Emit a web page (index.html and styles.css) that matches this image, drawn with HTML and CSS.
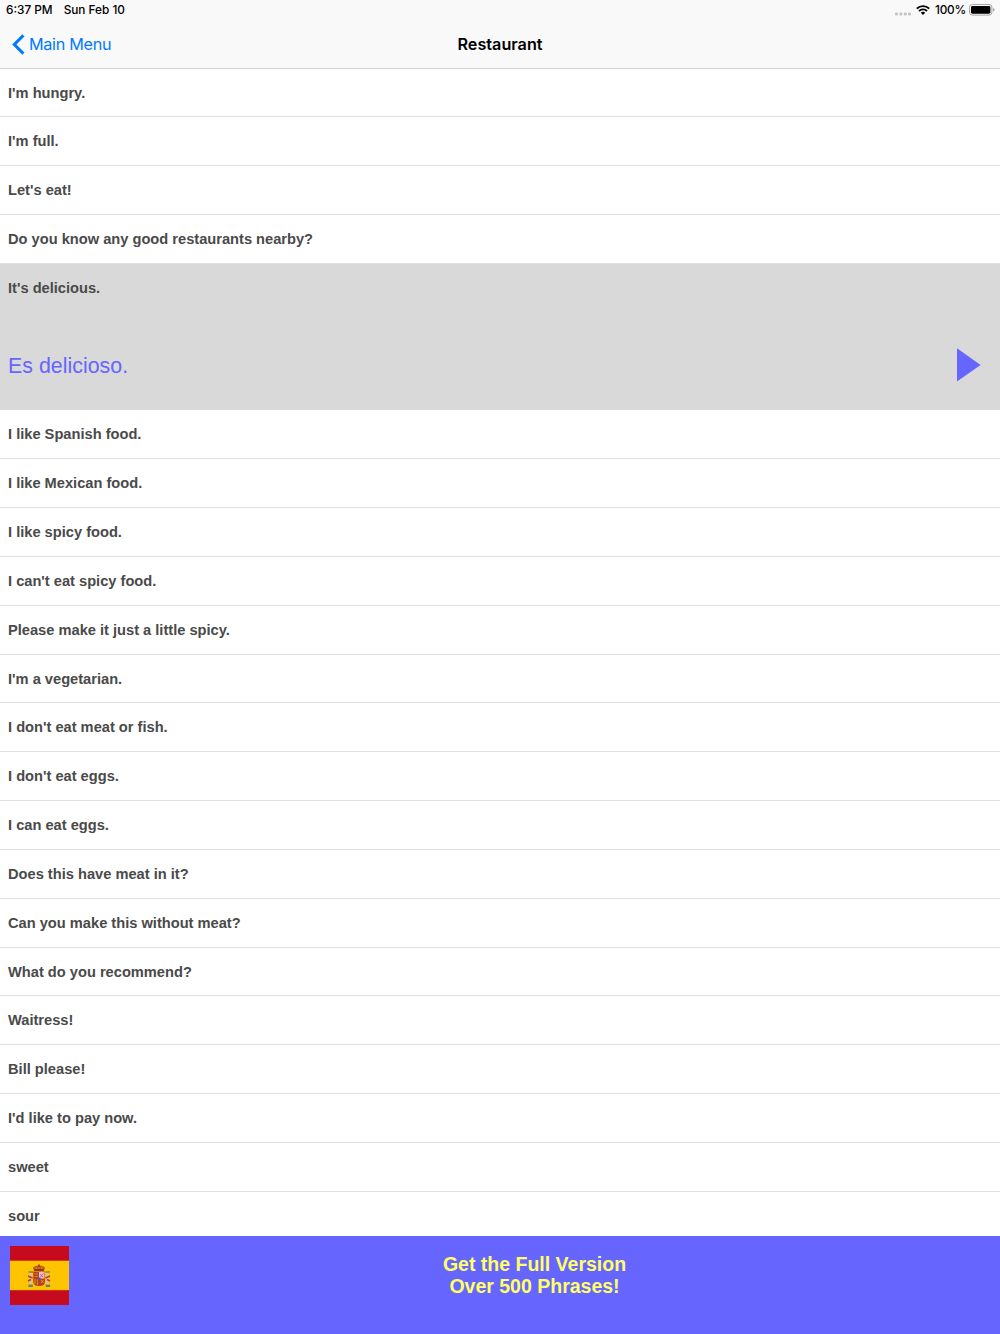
FILE: index.html
```html
<!DOCTYPE html>
<html lang="en">

<head>
  <meta charset="UTF-8">
  <meta name="viewport" content="width=device-width, initial-scale=1.0">
  <link rel="stylesheet" href="styles.css">
  <title>Restaurant</title>
</head>

<body>
  <div class="app">
    <header class="header">
      <!-- Status bar -->
      <div class="status-bar">
        <div class="status-left">
          <span class="time">6:37 PM</span>
          <span class="date">Sun Feb 10</span>
        </div>
        <div class="status-right">
          <svg class="signal" width="16" height="4" viewBox="0 0 16 4" fill="#c4c4c4">
            <rect x="0" y="0.6" width="3" height="2.8" rx="1" />
            <rect x="4.4" y="0.6" width="3" height="2.8" rx="1" />
            <rect x="8.8" y="0.6" width="3" height="2.8" rx="1" />
            <rect x="13" y="0.6" width="3" height="2.8" rx="1" />
          </svg>
          <svg class="wifi" width="14" height="10" viewBox="0 0 14 10" fill="none" stroke="#000" stroke-width="1.9">
            <path d="M0.8 3.7 A8.8 8.8 0 0 1 13.2 3.7" />
            <path d="M3 6 A5.7 5.7 0 0 1 11 6" />
            <path d="M4.8 7.7 A3.2 3.2 0 0 1 9.2 7.7 L7 9.9 Z" fill="#000" stroke="none" />
          </svg>
          <span class="percent">100%</span>
          <svg class="battery" width="26" height="12" viewBox="0 0 26 12">
            <rect x="0.5" y="0.5" width="22.4" height="10.6" rx="2.8" fill="none" stroke="#a6a6a6" />
            <rect x="2" y="2" width="19.4" height="7.7" rx="1.4" fill="#000" />
            <path d="M24 4 Q25.6 4.6 25.6 5.8 Q25.6 7 24 7.7 Z" fill="#a6a6a6" />
          </svg>
        </div>
      </div>

      <!-- Navigation bar -->
      <nav class="nav-bar">
        <a class="back" href="#">
          <svg width="13" height="21" viewBox="0 0 13 21" fill="none" stroke="#007aff" stroke-width="3">
            <path d="M11.4 1.4 L2.3 10.5 L11.4 19.6" />
          </svg>
          <span>Main Menu</span>
        </a>
        <h1>Restaurant</h1>
        <div class="nav-end"></div>
      </nav>
    </header>

    <ul class="phrases">
      <li>I'm hungry.</li>
      <li>I'm full.</li>
      <li>Let's eat!</li>
      <li>Do you know any good restaurants nearby?</li>
      <li class="selected">
        <div class="phrase">It's delicious.</div>
        <div class="answer">
          <span class="translation">Es delicioso.</span>
          <svg class="play" width="24" height="34" viewBox="0 0 24 34">
            <path d="M0 0.3 L23.6 17 L0 33.6 Z" fill="#6666ff" />
          </svg>
        </div>
      </li>
      <li>I like Spanish food.</li>
      <li>I like Mexican food.</li>
      <li>I like spicy food.</li>
      <li>I can't eat spicy food.</li>
      <li>Please make it just a little spicy.</li>
      <li>I'm a vegetarian.</li>
      <li>I don't eat meat or fish.</li>
      <li>I don't eat eggs.</li>
      <li>I can eat eggs.</li>
      <li>Does this have meat in it?</li>
      <li>Can you make this without meat?</li>
      <li>What do you recommend?</li>
      <li>Waitress!</li>
      <li>Bill please!</li>
      <li>I'd like to pay now.</li>
      <li>sweet</li>
      <li>sour</li>
    </ul>

    <!-- Upgrade banner -->
    <footer class="banner">
      <svg class="flag" width="59" height="59" viewBox="0 0 59 59">
        <rect width="59" height="59" fill="#c60b1e" />
        <rect y="14.7" width="59" height="29.5" fill="#ffc400" />
        <!-- pillars -->
        <rect x="19.7" y="25" width="2.2" height="14" fill="#ccc5b5" />
        <rect x="36.5" y="25" width="2.2" height="14" fill="#ccc5b5" />
        <path d="M18.5 26h4.5M35.5 26h4.5M18.5 39.2h4.5M35.5 39.2h4.5" stroke="#a08023" stroke-width="1.5" />
        <path d="M18 30l4.5 2M18 35l3 -1.5M40 30l-4.5 2M40 35l-3 -1.5" stroke="#c43a23" stroke-width="1.6" />
        <path d="M18.3 40.4h4.4M35.8 40.4h4.4" stroke="#557fa6" stroke-width="1.3" />
        <!-- crown -->
        <path d="M24 25 L23 21.5 Q25 19.5 29 19.5 Q33 19.5 35 21.5 L34 25 Z" fill="#b75a18" />
        <path d="M29 18.5v3M24.5 24h9" stroke="#8b2a16" stroke-width="1.3" />
        <path d="M25.5 22h1.5M28.2 22h1.5M31 22h1.5" stroke="#e8b020" stroke-width="1" />
        <!-- shield -->
        <path d="M23.2 25.5h11.8v10q0 4.5-5.9 4.5t-5.9-4.5z" fill="#b8401f" />
        <rect x="29" y="26" width="5.5" height="6.5" fill="#e9c0c4" />
        <path d="M30 28l3 3M33 27.5l-2.5 4" stroke="#c76094" />
        <path d="M24.5 28h3.5M24.5 30.5h3.5" stroke="#d3812a" stroke-width="1.2" />
        <path d="M25 33v5M27.3 33v6M31 34l2.5 3M33.5 34l-2.5 3" stroke="#da8b22" />
        <circle cx="29" cy="32.7" r="1.5" fill="#5b5793" />
      </svg>
      <p>Get the Full Version<br>Over 500 Phrases!</p>
    </footer>
  </div>
</body>

</html>
```
FILE: styles.css
```css
body {
  margin: 0;
  font-family: "Liberation Sans", Arial, sans-serif;
  background-color: #fff;
}

.app {
  display: flex;
  flex-direction: column;
  height: 1334px;
  overflow: hidden;
}

.header {
  box-sizing: border-box;
  flex: none;
  height: 69px;
  background-color: #f9f9f9;
  border-bottom: 1px solid #d2d2d2;
  font-family: Inter, "Liberation Sans", sans-serif;
}

.status-bar {
  display: flex;
  justify-content: space-between;
  height: 20px;
  padding: 0 5px 0 6px;
  font-size: 11.8px;
  font-weight: 500;
  line-height: 20px;
}

.status-left,
.status-right {
  display: flex;
  align-items: center;
}

.date {
  margin-left: 11px;
}

.signal {
  margin: 7px 5px 0 0;
}

.wifi {
  margin-right: 5px;
}

.percent {
  margin-right: 3px;
  letter-spacing: -0.2px;
}

.nav-bar {
  display: flex;
  align-items: center;
  height: 48px;
}

.back,
.nav-end {
  flex: 1 1 0;
  box-sizing: border-box;
}

.back {
  display: flex;
  align-items: center;
  padding-left: 12px;
  color: #007aff;
  font-size: 16.2px;
  letter-spacing: -0.3px;
  text-decoration: none;
}

.back span {
  margin-left: 4px;
}

.nav-end {
  padding-left: 12px;
}

h1 {
  margin: 0;
  font-size: 16.2px;
  font-weight: 600;
}

.phrases {
  flex: 1;
  min-height: 0;
  margin: -0.4px 0 0;
  padding: 0;
  overflow: hidden;
  list-style: none;
  color: #4a4a4a;
  font-size: 14.65px;
  font-weight: bold;
}

.phrases li {
  box-sizing: border-box;
  height: 48.83px;
  padding-left: 8px;
  border-bottom: 1px solid #e0e0e0;
  line-height: 49.6px;
}

.phrases .selected {
  height: 146.5px;
  background-color: #d9d9d9;
  border-color: #d9d9d9;
}

.answer {
  display: flex;
  align-items: center;
  justify-content: space-between;
  height: 97px;
  padding-right: 19px;
  box-sizing: border-box;
}

.translation {
  padding-top: 10px;
  color: #6666ff;
  font-size: 21.4px;
  font-weight: normal;
}

.play {
  margin-top: 5px;
}

.banner {
  display: flex;
  flex: none;
  height: 98px;
  padding: 9.5px 0 0 10px;
  box-sizing: border-box;
  background-color: #6666ff;
}

.banner p {
  flex: 1;
  margin: 7px 0 0;
  color: #ffff66;
  font-size: 19.5px;
  font-weight: bold;
  line-height: 22.5px;
  text-align: center;
}
```
